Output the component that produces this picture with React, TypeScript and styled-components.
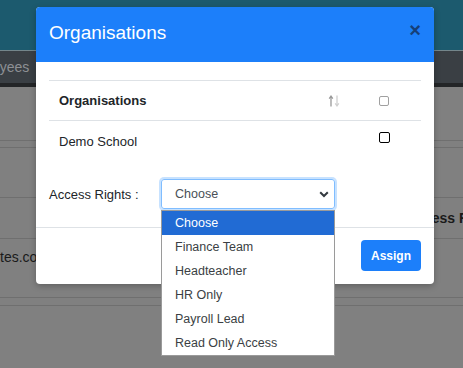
import React from "react";
import styled, { createGlobalStyle } from "styled-components";

const GlobalStyle = createGlobalStyle`
  html, body {
    margin: 0;
    padding: 0;
    background: #808080;
    font-family: "Liberation Sans", Arial, sans-serif;
    overflow: hidden;
  }
`;

const Page = styled.div`
  position: relative;
  width: 463px;
  height: 368px;
  overflow: hidden;
  background: #808080;
`;

const TopBar = styled.div`
  height: 50px;
  background: #1c5a6e;
  border-bottom: 1px solid #74868b;
`;

const TabBar = styled.div`
  height: 32px;
  display: flex;
  align-items: center;
  background: #3a3f44;
  border-bottom: 4px solid #232527;
`;

const Tab = styled.span`
  margin-left: -40px;
  font-size: 14px;
  color: #8d9094;
`;

const BgRow = styled.div<{ $h: number; $pad?: number }>`
  height: ${(p) => p.$h}px;
  display: flex;
  align-items: ${(p) => (p.$pad ? "flex-start" : "center")};
  padding-top: ${(p) => p.$pad || 0}px;
  box-sizing: border-box;
  border-bottom: 1px solid #6f6f6f;
`;

const BgHeading = styled.span`
  margin-left: 406px;
  font-size: 14px;
  font-weight: bold;
  color: #1a1a1a;
  white-space: nowrap;
`;

const BgText = styled.span`
  font-size: 14px;
  color: #1a1a1a;
`;

const Modal = styled.div`
  position: absolute;
  top: 7px;
  left: 36px;
  width: 398px;
  background: #fff;
  border-radius: 4px;
  box-shadow: 0 2px 6px rgba(0, 0, 0, 0.25);
`;

const ModalHeader = styled.div`
  height: 55px;
  display: flex;
  align-items: center;
  justify-content: space-between;
  padding: 0 13px 4px 13px;
  box-sizing: border-box;
  background: #1c7ffa;
  border-radius: 4px 4px 0 0;
`;

const Title = styled.h5`
  margin: 0;
  font-size: 19px;
  font-weight: normal;
  color: #fff;
`;

const Close = styled.button`
  align-self: flex-start;
  margin-top: 13px;
  border: none;
  background: none;
  padding: 0;
  font-family: inherit;
  font-size: 20px;
  font-weight: bold;
  line-height: 1;
  color: #163f78;
`;

const ModalBody = styled.div`
  padding: 18px 13px 0;
`;

const Row = styled.div<{ $head?: boolean }>`
  display: grid;
  grid-template-columns: 1fr 40px 60px;
  padding-right: 7px;
  height: ${(p) => (p.$head ? 39 : 40)}px;
  align-items: center;
  border-top: ${(p) => (p.$head ? "1px solid #dee2e6" : "none")};
  border-bottom: ${(p) => (p.$head ? "1px solid #dee2e6" : "none")};
`;

const Cell = styled.div<{ $bold?: boolean }>`
  padding-left: 10px;
  font-size: 13px;
  font-weight: ${(p) => (p.$bold ? "bold" : "normal")};
  color: #212529;
`;

const IconCell = styled.div`
  display: flex;
  justify-content: center;
`;

const Check = styled.span<{ $strong?: boolean }>`
  width: ${(p) => (p.$strong ? 11 : 10)}px;
  height: ${(p) => (p.$strong ? 11 : 10)}px;
  box-sizing: border-box;
  border: 1px solid ${(p) => (p.$strong ? "#000" : "#a0a0a0")};
  border-radius: 2px;
  margin-bottom: ${(p) => (p.$strong ? 8 : 0)}px;
`;

const AccessRow = styled.div`
  display: flex;
  align-items: center;
  margin-top: 18px;
`;

const Label = styled.label`
  width: 112px;
  font-size: 13px;
  color: #212529;
`;

const SelectWrap = styled.div`
  position: relative;
  width: 174px;
`;

const SelectBox = styled.div`
  height: 30px;
  display: flex;
  align-items: center;
  justify-content: space-between;
  padding: 0 5px 0 13px;
  box-sizing: border-box;
  border: 1px solid #80bdff;
  border-radius: 3px;
  box-shadow: 0 0 0 2px rgba(0, 123, 255, 0.22);
  font-size: 12.5px;
  color: #495057;
`;

const Options = styled.ul`
  position: absolute;
  top: 31px;
  left: 0;
  width: 174px;
  margin: 0;
  padding: 0;
  list-style: none;
  box-sizing: border-box;
  border: 1px solid #9a9a9a;
  background: #fff;
  z-index: 2;
`;

const Option = styled.li<{ $active?: boolean }>`
  height: 24px;
  line-height: 24px;
  padding-left: 13px;
  font-size: 12.5px;
  color: ${(p) => (p.$active ? "#fff" : "#3b3f44")};
  background: ${(p) => (p.$active ? "#216bd4" : "transparent")};
`;

const ModalFooter = styled.div`
  margin-top: 18px;
  padding: 12px 13px 13px;
  display: flex;
  justify-content: flex-end;
  border-top: 1px solid #dee2e6;
`;

const Button = styled.button`
  height: 31px;
  padding: 0 10px;
  border: none;
  border-radius: 4px;
  background: #1c7ffa;
  color: #fff;
  font-family: inherit;
  font-size: 12px;
  font-weight: bold;
`;

const SortIcon = () => (
  <svg width="12" height="12" viewBox="0 0 12 12" fill="none" strokeWidth="1.3">
    <g stroke="#999">
      <line x1="3" y1="1.5" x2="3" y2="11.5" />
      <path d="M1.2 3.6 L3 1.2 L4.8 3.6" />
    </g>
    <g stroke="#cfcfcf">
      <line x1="9" y1="0.5" x2="9" y2="10.5" />
      <path d="M7.2 8.4 L9 10.8 L10.8 8.4" />
    </g>
  </svg>
);

const Chevron = () => (
  <svg width="10" height="7" viewBox="0 0 10 7" fill="none">
    <path d="M1.2 1.2 L5 5 L8.8 1.2" stroke="#343a40" strokeWidth="2" />
  </svg>
);

const roles = ["Choose", "Finance Team", "Headteacher", "HR Only", "Payroll Lead", "Read Only Access"];

export default function App() {
  return (
    <Page>
      <GlobalStyle />
      <TopBar />
      <TabBar>
        <Tab>Employees</Tab>
      </TabBar>
      <BgRow $h={54} />
      <BgRow $h={7} />
      <BgRow $h={50} />
      <BgRow $h={41}>
        <BgHeading>Access Rights</BgHeading>
      </BgRow>
      <BgRow $h={59} $pad={10}>
        <BgText>tes.com</BgText>
      </BgRow>
      <BgRow $h={8} />

      <Modal>
        <ModalHeader>
          <Title>Organisations</Title>
          <Close>×</Close>
        </ModalHeader>
        <ModalBody>
          <Row $head>
            <Cell $bold>Organisations</Cell>
            <IconCell>
              <SortIcon />
            </IconCell>
            <IconCell>
              <Check />
            </IconCell>
          </Row>
          <Row>
            <Cell>Demo School</Cell>
            <div />
            <IconCell>
              <Check $strong />
            </IconCell>
          </Row>
          <AccessRow>
            <Label>Access Rights :</Label>
            <SelectWrap>
              <SelectBox>
                <span>Choose</span>
                <Chevron />
              </SelectBox>
              <Options>
                {roles.map((r, i) => (
                  <Option key={r} $active={i === 0}>
                    {r}
                  </Option>
                ))}
              </Options>
            </SelectWrap>
          </AccessRow>
        </ModalBody>
        <ModalFooter>
          <Button>Assign</Button>
        </ModalFooter>
      </Modal>
    </Page>
  );
}
